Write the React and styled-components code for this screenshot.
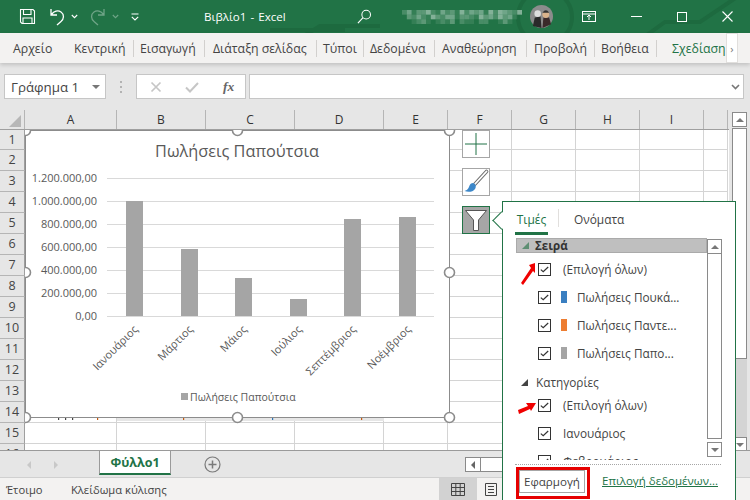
import React from "react";
import styled, { createGlobalStyle } from "styled-components";

const Global = createGlobalStyle`
  html, body { margin: 0; padding: 0; background: #e6e6e6; overflow: hidden; }
  * { box-sizing: border-box; }
`;
const FONT = `"Open Sans", "Noto Sans", "Liberation Sans", sans-serif`;

const Window = styled.div`
  position: relative; width: 750px; height: 500px; overflow: hidden;
  display: flex; flex-direction: column; background: #e6e6e6;
  font-family: ${FONT}; color: #444;
`;
const TitleBar = styled.header`
  position: relative; height: 33px; flex: none; background: #217346; color: #fff;
  display: flex; align-items: center; padding-left: 19px; overflow: hidden;
`;
const TitleArt = styled.svg`
  position: absolute; inset: 0; width: 750px; height: 33px;
`;
const QuickIcons = styled.div`
  position: relative; display: flex; align-items: center; width: 185px; height: 33px; flex: none;
`;
const QuickIcon = styled.svg`
  flex: none; margin-right: ${p => p.$gap || 0}px; opacity: ${p => p.$dim ? 0.35 : 1};
`;
const DocTitle = styled.div`
  position: relative; width: 90px; flex: none; font-size: 11.6px; white-space: pre; word-spacing: -1px;
`;
const SearchIcon = styled.svg`
  position: relative; flex: none; margin-left: 63px;
`;
const Blur = styled.svg`
  position: relative; flex: none; margin-left: 30px;
`;
const Avatar = styled.svg`
  position: relative; flex: none; margin-left: 8px;
`;
const WinButtons = styled.div`
  position: relative; display: flex; align-items: center; margin-left: 29px; gap: 35px;
`;
const Ribbon = styled.nav`
  position: relative; height: 30px; flex: none; background: #f3f2f1;
  display: flex; align-items: center; padding-left: 13px; font-size: 12.3px;
  box-shadow: 0 2px 4px rgba(0,0,0,.16);
  z-index: 1;
`;
const FileTab = styled.span`
  width: 61px; flex: none; color: #444;
`;
const Tab = styled.span`
  flex: none; height: 17px; line-height: 17px; white-space: nowrap;
  width: ${p => p.$w}px; color: ${p => p.$accent ? "#217346" : "#444"};
  border-right: ${p => p.$sep ? "1px solid #d2d0ce" : "none"};
  margin-right: ${p => p.$mr || 0}px;
`;
const RibbonMore = styled.div`
  width: 12px; height: 30px; flex: none; background: #fff; border: 1px solid #e1dfdd;
  color: #777; font-size: 11px; display: flex; align-items: center; justify-content: center;
`;
const FormulaRow = styled.div`
  height: 47px; flex: none; padding: 11px 6px 11px 4px; display: flex; align-items: stretch;
`;
const NameBox = styled.div`
  width: 102px; flex: none; background: #fff; border: 1px solid #c6c6c6;
  display: flex; align-items: center; justify-content: space-between;
  padding: 0 5px 0 6px; font-size: 13.3px; color: #444;
`;
const Caret = styled.span`
  width: 0; height: 0; border-left: 4px solid transparent; border-right: 4px solid transparent;
  border-top: 4px solid #777;
`;
const Dots = styled.div`
  width: 30px; flex: none; display: flex; flex-direction: column; align-items: center;
  justify-content: center; gap: 3px;
`;
const Dot = styled.i`
  width: 2px; height: 2px; background: #b3b3b3; display: block;
`;
const FxBox = styled.div`
  width: 110px; flex: none; background: #fff; border: 1px solid #c6c6c6;
  display: flex; align-items: center; padding-left: 13px; gap: 23px;
`;
const Fx = styled.span`
  font-family: "Liberation Serif", serif; font-style: italic; font-weight: 700; font-size: 13.5px; color: #666;
  margin-left: 1px;
`;
const FormulaInput = styled.div`
  flex: 1; margin-left: 3px; background: #fff; border: 1px solid #c6c6c6;
  display: flex; align-items: center; justify-content: flex-end; padding-right: 3px;
`;
const Sheet = styled.section`
  position: relative; flex: 1; min-height: 0; display: flex; overflow: hidden;
`;
const SheetMain = styled.div`
  width: 729px; flex: none; display: flex; flex-direction: column; background: #fff;
`;
const HeaderRow = styled.div`
  display: flex; height: 20px; flex: none; background: #e6e6e6; border-bottom: 1px solid #9f9f9f;
`;
const Corner = styled.div`
  width: 25px; flex: none; position: relative; border-right: 1px solid #b5b5b5;
  &::after {
    content: ""; position: absolute; right: 3px; bottom: 2px; width: 0; height: 0;
    border-left: 12px solid transparent; border-bottom: 12px solid #b7b7b7;
  }
`;
const ColHead = styled.div`
  flex: none; width: ${p => p.$w}px; border-right: 1px solid #b5b5b5; text-align: center;
  font-size: 12px; line-height: 19px; color: #333;
`;
const BodyRow = styled.div`
  flex: 1; min-height: 0; display: flex; overflow: hidden;
`;
const RowHeads = styled.div`
  width: 25px; flex: none; display: grid; grid-template-rows: 20px; grid-auto-rows: 21px; background: #e6e6e6;
`;
const RowHead = styled.div`
  border-right: 1px solid #9f9f9f; border-bottom: 1px solid #b5b5b5; text-align: center;
  font-size: 12.5px; line-height: 20px; color: #444;
`;
const Cells = styled.div`
  position: relative; flex: 1; overflow: hidden; display: grid;
  grid-template-columns: 92px 89px 89px 89px 64px 64px 64px 64px 64px 24px;
  grid-template-rows: 20px; grid-auto-rows: 21px;
`;
const Cell = styled.div`
  border-right: 1px solid #d4d4d4; border-bottom: 1px solid #d4d4d4;
`;
const ChartFrame = styled.div`
  position: absolute; left: 0; top: 0; width: 425px; height: 288px;
`;
const ChartSvg = styled.svg`
  display: block; overflow: visible;
  font-family: ${FONT};
`;
const VScroll = styled.div`
  flex: 1; display: flex; flex-direction: column; padding: 2px 3px 0 3px; background: #e6e6e6;
`;
const ScrollBtn = styled.div`
  height: 15px; flex: none; background: #fff; border: 1px solid #8a8a8a;
  display: flex; align-items: center; justify-content: center;
`;
const TriUp = styled.i`
  width: 0; height: 0; border-left: 4px solid transparent; border-right: 4px solid transparent;
  border-bottom: 4px solid #777;
`;
const TriDown = styled.i`
  width: 0; height: 0; border-left: 4px solid transparent; border-right: 4px solid transparent;
  border-top: 4px solid #777;
`;
const TriLeft = styled.i`
  width: 0; height: 0; border-top: 4px solid transparent; border-bottom: 4px solid transparent;
  border-right: 4px solid #666;
`;
const VThumb = styled.div`
  height: 231px; flex: none; margin-top: 1px; background: #fff; border: 1px solid #8a8a8a;
`;
const VTrack = styled.div`
  height: 78px; flex: none; background: #d4d4d4;
`;
const TabBar = styled.div`
  height: 28px; flex: none; display: flex; align-items: flex-start; background: #e6e6e6;
  border-top: 1px solid #9a9a9a; border-bottom: 1px solid #d0d0d0;
`;
const TabNav = styled.div`
  width: 99px; flex: none; height: 27px; display: flex; align-items: center; padding-left: 27px; gap: 23px;
`;
const NavArrow = styled.i`
  width: 0; height: 0; border-top: 4px solid transparent; border-bottom: 4px solid transparent;
  ${p => p.$right ? "border-left: 4px solid #c8c8c8;" : "border-right: 4px solid #c8c8c8;"}
`;
const SheetTab = styled.div`
  width: 72px; flex: none; height: 25px; margin-top: -1px; background: #fff; color: #217346;
  border: 1px solid #9a9a9a; border-top-color: #9a9a9a; border-bottom: 2px solid #217346;
  font-size: 12.5px; font-weight: 700; text-align: center; line-height: 23px;
`;
const AddSheet = styled.svg`
  flex: none; margin: 5px 0 0 33px;
`;
const HScrollLeft = styled.div`
  width: 16px; height: 15px; flex: none; margin: 6px 0 0 244px; background: #fff; border: 1px solid #8a8a8a;
  display: flex; align-items: center; justify-content: center;
`;
const HTrack = styled.div`
  width: 40px; height: 15px; flex: none; margin-top: 6px; background: #fff; border: 1px solid #8a8a8a; border-left: none;
`;
const StatusBar = styled.footer`
  height: 22px; flex: none; background: #f3f2f1; display: flex; align-items: center;
  padding-left: 6px; font-size: 11.2px; color: #444;
`;
const StatusText = styled.span`
  flex: none; width: ${p => p.$w}px;
`;
const ViewBtn = styled.div`
  height: 22px; flex: none; width: ${p => p.$w}px; background: ${p => p.$on ? "#d2d2d2" : "transparent"};
  display: flex; align-items: center; justify-content: center;
`;
const ChartButtons = styled.div`
  position: absolute; left: 462px; top: 130px; display: flex; flex-direction: column; gap: 10px;
`;
const ChartButton = styled.div`
  width: 28px; height: 28px; display: flex; align-items: center; justify-content: center;
  background: ${p => p.$on ? "#a6a6a6" : "#fff"};
  border: 1px solid ${p => p.$on ? "#217346" : "#a6a6a6"};
`;
const Panel = styled.aside`
  position: absolute; left: 502px; top: 201px; width: 234px; height: 300px; background: #fff;
  border: 1px solid #217346; display: flex; flex-direction: column; padding: 0 0 0 12px;
  &::before {
    content: ""; position: absolute; left: -8px; top: 12px; width: 12px; height: 12px;
    background: #fff; border-left: 1px solid #217346; border-bottom: 1px solid #217346;
    transform: rotate(45deg);
  }
`;
const PanelTabs = styled.div`
  position: relative; height: 35px; flex: none; display: flex; align-items: flex-start; font-size: 11.9px;
`;
const PanelTab = styled.div`
  flex: none; height: 33px; padding: 8px 0 0 0; line-height: 18px;
  width: ${p => p.$w}px; text-align: ${p => p.$active ? "center" : "left"};
  color: ${p => p.$active ? "#217346" : "#444"};
  border-bottom: ${p => p.$active ? "3px solid #217346" : "none"};
`;
const PanelDivider = styled.i`
  width: 1px; height: 18px; margin: 7px 15px 0 10px; background: #e1dfdd; flex: none;
`;
const PanelBody = styled.div`
  height: 223px; flex: none; display: flex; overflow: hidden;
`;
const List = styled.div`
  width: 192px; flex: none; height: 223px; overflow: hidden; font-size: 11.8px; padding-left: 1px;
`;
const ListHeader = styled.div`
  height: 15px; background: #bfbfbf; border: 1px solid #aaa; display: flex; align-items: center;
  padding-left: 5px; margin-top: 1px; margin-bottom: 2px;
  font-weight: 700; gap: 6px; font-size: 11.6px; color: #333;
`;
const Corner3 = styled.i`
  width: 0; height: 0; border-left: 7px solid transparent; border-bottom: 7px solid ${p => p.$c};
  flex: none;
`;
const ListCategory = styled.div`
  height: 24px; display: flex; align-items: center; padding: 6px 0 0 5px; gap: 8px; color: #444;
`;
const ListRow = styled.div`
  height: 28px; display: flex; align-items: center; padding-left: 22px; white-space: nowrap; color: #444;
`;
const Check = styled.span`
  width: 13px; height: 13px; flex: none; border: 1px solid #333; margin-right: 12px;
  display: flex; align-items: center; justify-content: center;
`;
const Swatch = styled.i`
  width: 6px; height: 12px; flex: none; background: ${p => p.$c}; margin: 0 10px 0 -2px;
`;
const PanelScroll = styled.div`
  width: 15px; flex: none; height: 218px; display: flex; flex-direction: column; margin-top: 2px;
`;
const PanelTrack = styled.div`
  flex: 1; border-left: 1px solid #8a8a8a; border-right: 1px solid #8a8a8a; border-bottom: 1px solid #8a8a8a;
  margin-bottom: 3px;
`;
const PanelFoot = styled.div`
  position: relative; flex: 1; border-top: 1px dotted #a6a6a6; margin: 4px 14px 0 0; display: flex; align-items: flex-start; gap: 12px;
`;
const ApplyOutline = styled.div`
  width: 74px; height: 32px; flex: none; margin: 2px 0 0 1px; border: 3px solid #e60000;
  display: flex; padding: 0 2px 2px 0;
`;
const ApplyBtn = styled.div`
  width: 67px; height: 23px; border: 1px solid #a6a6a6; font-size: 11.6px; color: #444;
  display: flex; align-items: center; justify-content: center; background: #fff;
`;
const DataLink = styled.span`
  font-size: 11.5px; color: #217346; text-decoration: underline; white-space: nowrap; margin-top: 8px;
`;
const RedArrow = styled.svg`
  position: absolute; left: ${p => p.$x}px; top: ${p => p.$y}px;
`;

const cols = [["A",92],["B",89],["C",89],["D",89],["E",64],["F",64],["G",64],["H",64],["I",64],["",25]];
const rows = Array.from({ length: 16 }, (_, i) => i + 1);

const chartLabels = [["Ιανουάριος",134.5],["Μάρτιος",189.5],["Μάιος",243.5],["Ιούλιος",298.5],["Σεπτέμβριος",352.5],["Νοέμβριος",407.5]];
const bars = [[126,201],[181,249],[235,278],[290,299],[344,219],[399,217]];
const ticks = [["1.200.000,00",178],["1.000.000,00",201],["800.000,00",224],["600.000,00",247],["400.000,00",270],["200.000,00",293],["0,00",316]];
const handles = [[0,0],[212,0],[424,0],[0,142],[424,142],[0,287],[212,287],[424,287]];
const peeks = [[58,"#444"],[65,"#444"],[72,"#444"],[97,"#c55a11"],[183,"#c55a11"],[272,"#2e75b6"],[361,"#c55a11"]];
const mosaic = [
  "2413352142315243415254325",
  "0324215324413321534253410",
  "0012310121302110220013100",
];

function Chart() {
  return (
    <ChartFrame>
      <ChartSvg width="425" height="288" viewBox="25 130 425 288">
        <rect x="117" y="418" width="267" height="3" fill="#e6e6e6" />
        {peeks.map(([x, c]) => <rect key={x} x={x} y="418" width="1.200" height="2" fill={c} />)}
        <rect x="25.5" y="130.5" width="424" height="287" fill="#fff" stroke="#8c8c8c" />
        <text x="237" y="157" textAnchor="middle" fontSize="16.3" fill="#595959">Πωλήσεις Παπούτσια</text>
        {ticks.map(([t, y]) => (
          <g key={t}>
            <line x1="107" x2="434" y1={y + .5} y2={y + .5} stroke="#d9d9d9" />
            <text x="97" y={y + 4} textAnchor="end" fontSize="11" fill="#595959">{t}</text>
          </g>
        ))}
        {bars.map(([x, y]) => <rect key={x} x={x} y={y} width="17" height={316 - y} fill="#a5a5a5" />)}
        {chartLabels.map(([t, x]) => (
          <text key={t} x={x + 4} y="330" textAnchor="end" fontSize="11" fill="#595959" transform={`rotate(-45 ${x + 4} 330)`}>{t}</text>
        ))}
        <rect x="181" y="393" width="7" height="7" fill="#a5a5a5" />
        <text x="190" y="401" fontSize="10.5" fill="#595959">Πωλήσεις Παπούτσια</text>
        {handles.map(([x, y]) => (
          <circle key={`${x}-${y}`} cx={25.5 + x} cy={130.5 + y} r="5" fill="#fff" stroke="#8c8c8c" strokeWidth="1.6" />
        ))}
      </ChartSvg>
    </ChartFrame>
  );
}

const CheckMark = () => (
  <svg width="9" height="7" viewBox="0 0 9 7"><path d="M.8 3.6 3.2 5.8 8.2 1" fill="none" stroke="#333" strokeWidth="1.2" /></svg>
);

function ChkRow({ children, color }) {
  return (
    <ListRow>
      <Check><CheckMark /></Check>
      {color && <Swatch $c={color} />}
      <span>{children}</span>
    </ListRow>
  );
}

export default function App() {
  return (
    <Window>
      <Global />
      <TitleBar>
        <TitleArt viewBox="0 0 750 33">
          <g fill="none" stroke="#1d6a3f" strokeWidth="4">
            <circle cx="545" cy="17" r="27" />
            <path d="M640 40 L665 22 H700 L740 -5" />
            <path d="M270 30 H345 M300 38 L320 26 H380" />
          </g>
        </TitleArt>
        <QuickIcons>
          <QuickIcon $gap={14} width="17" height="17" viewBox="0 0 17 17">
            <path d="M1.5 1.500H14L15.500 3V15.500H3L1.500 14Z M4.500 1.500V6.500H12V1.500 M4 15.500V10H13V15.500" fill="none" stroke="#fff" strokeWidth="1.1" />
          </QuickIcon>
          <QuickIcon $gap={5} width="16" height="19" viewBox="0 0 16 19">
            <path d="M1 2V8H7 M1.500 7.500C4 4 8 3 11 5C14.500 7.500 14 12 11 14.500L7 18" fill="none" stroke="#fff" strokeWidth="1.3" />
          </QuickIcon>
          <QuickIcon $gap={11} width="7" height="5" viewBox="0 0 7 5"><path d="M.8 1 3.500 3.700 6.200 1" fill="none" stroke="#fff" strokeWidth="1.1" /></QuickIcon>
          <QuickIcon $dim $gap={7} width="16" height="19" viewBox="0 0 16 19">
            <path d="M15 2V8H9 M14.500 7.500C12 4 8 3 5 5C1.500 7.500 2 12 5 14.500L9 18" fill="none" stroke="#fff" strokeWidth="1.3" />
          </QuickIcon>
          <QuickIcon $dim $gap={12} width="7" height="5" viewBox="0 0 7 5"><path d="M.8 1 3.500 3.700 6.200 1" fill="none" stroke="#fff" strokeWidth="1.1" /></QuickIcon>
          <QuickIcon width="8" height="8" viewBox="0 0 8 8"><path d="M.5 1H7.500 M.8 3.800 4 7 7.200 3.800" fill="none" stroke="#fff" strokeWidth="1.1" /></QuickIcon>
        </QuickIcons>
        <DocTitle>Βιβλίο1  -  Excel</DocTitle>
        <SearchIcon width="15" height="15" viewBox="0 0 16 16">
          <circle cx="9.800" cy="6" r="4.600" fill="none" stroke="#fff" strokeWidth="1.1" />
          <path d="M6.400 9.300 1 15" stroke="#fff" strokeWidth="1.2" />
        </SearchIcon>
        <Blur width="120" height="14" viewBox="0 0 100 12" preserveAspectRatio="none">
          {mosaic.flatMap((row, y) => row.split("").map((v, x) => (
            <rect key={`${x}-${y}`} x={x * 4} y={y * 4} width="4" height="4" fill="#b9d3c5" opacity={Number(v) * 0.13} />
          )))}
        </Blur>
        <Avatar width="23" height="23" viewBox="0 0 24 24">
          <circle cx="12" cy="12" r="12" fill="#8c8c8c" />
          <path d="M3 22 L5 13 L11 12 L12 24Z" fill="#2a2a2a" />
          <path d="M13 24 L14 13 L20 13 L22 20Z" fill="#3a2a2a" />
          <circle cx="8" cy="9" r="3.400" fill="#ddd" />
          <circle cx="16.500" cy="10" r="3.600" fill="#d9b38c" />
          <path d="M13 8 Q16.500 3 20 8" fill="#333" />
        </Avatar>
        <WinButtons>
          <svg width="14" height="11" viewBox="0 0 14 11" fill="none" stroke="#fff">
            <rect x=".5" y=".5" width="13" height="10" />
            <path d="M.5 3H13.500 M7 9V4.500 M5 6 7 4 9 6" />
          </svg>
          <svg width="11" height="1" viewBox="0 0 11 1"><rect width="11" height="1" fill="#fff" /></svg>
          <svg width="10" height="10" viewBox="0 0 10 10"><rect x=".5" y=".5" width="9" height="9" fill="none" stroke="#fff" /></svg>
          <svg width="11" height="11" viewBox="0 0 11 11"><path d="M.5.5 10.500 10.500M10.500.5.5 10.500" stroke="#fff" strokeWidth="1.1" /></svg>
        </WinButtons>
      </TitleBar>

      <Ribbon>
        <FileTab>Αρχείο</FileTab>
        <Tab $w={60} $sep $mr={6}>Κεντρική</Tab>
        <Tab $w={65} $sep $mr={8}>Εισαγωγή</Tab>
        <Tab $w={104} $sep $mr={6}>Διάταξη σελίδας</Tab>
        <Tab $w={41} $sep $mr={6}>Τύποι</Tab>
        <Tab $w={65} $sep $mr={7}>Δεδομένα</Tab>
        <Tab $w={85} $sep $mr={7}>Αναθεώρηση</Tab>
        <Tab $w={61} $sep $mr={6}>Προβολή</Tab>
        <Tab $w={56} $sep $mr={15}>Βοήθεια</Tab>
        <Tab $accent $w={54}>Σχεδίαση</Tab>
        <RibbonMore>›</RibbonMore>
      </Ribbon>

      <FormulaRow>
        <NameBox>Γράφημα 1<Caret /></NameBox>
        <Dots><Dot /><Dot /><Dot /></Dots>
        <FxBox>
          <svg width="12" height="12" viewBox="0 0 12 12"><path d="M1.500 1.500 10.500 10.500M10.500 1.500 1.500 10.500" stroke="#c6c6c6" strokeWidth="1.7" /></svg>
          <svg width="14" height="12" viewBox="0 0 14 12"><path d="M1 6.500 5 10.500 13 2" fill="none" stroke="#c6c6c6" strokeWidth="2" /></svg>
          <Fx>fx</Fx>
        </FxBox>
        <FormulaInput>
          <svg width="9" height="6" viewBox="0 0 9 6"><path d="M1 1 4.500 4.500 8 1" fill="none" stroke="#777" strokeWidth="1.6" /></svg>
        </FormulaInput>
      </FormulaRow>

      <Sheet>
        <SheetMain>
          <HeaderRow>
            <Corner />
            {cols.map(([c, w], i) => <ColHead key={i} $w={i === 9 ? 24 : w}>{c}</ColHead>)}
          </HeaderRow>
          <BodyRow>
            <RowHeads>{rows.map(r => <RowHead key={r}>{r}</RowHead>)}</RowHeads>
            <Cells>
              {rows.flatMap(r => cols.map((_, c) => <Cell key={`${r}-${c}`} />))}
              <Chart />
            </Cells>
          </BodyRow>
        </SheetMain>
        <VScroll>
          <ScrollBtn><TriUp /></ScrollBtn>
          <VThumb />
          <VTrack />
          <ScrollBtn><TriDown /></ScrollBtn>
        </VScroll>
      </Sheet>

      <TabBar>
        <TabNav><NavArrow /><NavArrow $right /></TabNav>
        <SheetTab>Φύλλο1</SheetTab>
        <AddSheet width="17" height="17" viewBox="0 0 17 17">
          <circle cx="8.500" cy="8.500" r="7.500" fill="none" stroke="#7a7a7a" strokeWidth="1.2" />
          <path d="M8.500 4.500V12.500M4.500 8.500H12.500" stroke="#7a7a7a" strokeWidth="1.5" />
        </AddSheet>
        <HScrollLeft><TriLeft /></HScrollLeft>
        <HTrack />
      </TabBar>

      <StatusBar>
        <StatusText $w={65}>Έτοιμο</StatusText>
        <StatusText $w={368}>Κλείδωμα κύλισης</StatusText>
        <ViewBtn $on $w={38}>
          <svg width="14" height="13" viewBox="0 0 14 13" fill="none" stroke="#444"><path d="M.5.5H13.500V12.500H.5ZM.5 4.500H13.500M.5 8.500H13.500M4.800.5V12.500M9.200.5V12.500" /></svg>
        </ViewBtn>
        <ViewBtn $w={28}>
          <svg width="12" height="13" viewBox="0 0 12 13" fill="none" stroke="#444"><path d="M.5.5H11.500V12.500H.5ZM3 3.500H9M3 6.500H9M3 9.500H9" /></svg>
        </ViewBtn>
      </StatusBar>

      <ChartButtons>
        <ChartButton>
          <svg width="22" height="22" viewBox="0 0 22 22"><path d="M11 0V22M0 11H22" stroke="#217346" /></svg>
        </ChartButton>
        <ChartButton>
          <svg width="26" height="26" viewBox="0 0 26 26">
            <path d="M23.500 2.500 12 15" stroke="#6f6f6f" strokeWidth="3.600" strokeLinecap="round" />
            <path d="M23.500 2.500 12 15" stroke="#fff" strokeWidth="1.800" strokeLinecap="round" />
            <path d="M10 14C7 14 6.500 17 5.500 19C4.800 20.500 3 21.500 1.500 22C5 23.500 10 23 12 20C13.500 18 13 15 10 14Z" fill="#3c87c9" />
          </svg>
        </ChartButton>
        <ChartButton $on>
          <svg width="24" height="24" viewBox="0 0 24 24"><path d="M1.500 2.500H22.500L14.500 12V22.500H9.500V12Z" fill="#fff" stroke="#555" /></svg>
        </ChartButton>
      </ChartButtons>

      <Panel>
        <PanelTabs>
          <PanelTab $active $w={33}>Τιμές</PanelTab>
          <PanelDivider />
          <PanelTab $w={70}>Ονόματα</PanelTab>
        </PanelTabs>
        <PanelBody>
          <List>
            <ListHeader><Corner3 $c="#5f8f73" />Σειρά</ListHeader>
            <ChkRow>(Επιλογή όλων)</ChkRow>
            <ChkRow color="#3a7fc1">Πωλήσεις Πουκά...</ChkRow>
            <ChkRow color="#ed7d31">Πωλήσεις Παντε...</ChkRow>
            <ChkRow color="#a5a5a5">Πωλήσεις Παπο...</ChkRow>
            <ListCategory><Corner3 $c="#444" />Κατηγορίες</ListCategory>
            <ChkRow>(Επιλογή όλων)</ChkRow>
            <ChkRow>Ιανουάριος</ChkRow>
            <ChkRow>Φεβρουάριος</ChkRow>
          </List>
          <PanelScroll>
            <ScrollBtn><TriUp /></ScrollBtn>
            <PanelTrack />
            <ScrollBtn><TriDown /></ScrollBtn>
          </PanelScroll>
        </PanelBody>
        <PanelFoot>
          <ApplyOutline><ApplyBtn>Εφαρμογή</ApplyBtn></ApplyOutline>
          <DataLink>Επιλογή δεδομένων...</DataLink>
        </PanelFoot>
      </Panel>

      <RedArrow $x={520} $y={262} width="16" height="24" viewBox="0 0 16 24">
        <path d="M15 1 L9 3 L11 6 L1 21 L3 23 L13 9 L15 11Z" fill="#f00000" />
      </RedArrow>
      <RedArrow $x={517} $y={402} width="20" height="13" viewBox="0 0 20 13">
        <path d="M19 1 L9 1 L11 4 L1 8 L2 12 L13 7 L14 9Z" fill="#f00000" />
      </RedArrow>
    </Window>
  );
}
